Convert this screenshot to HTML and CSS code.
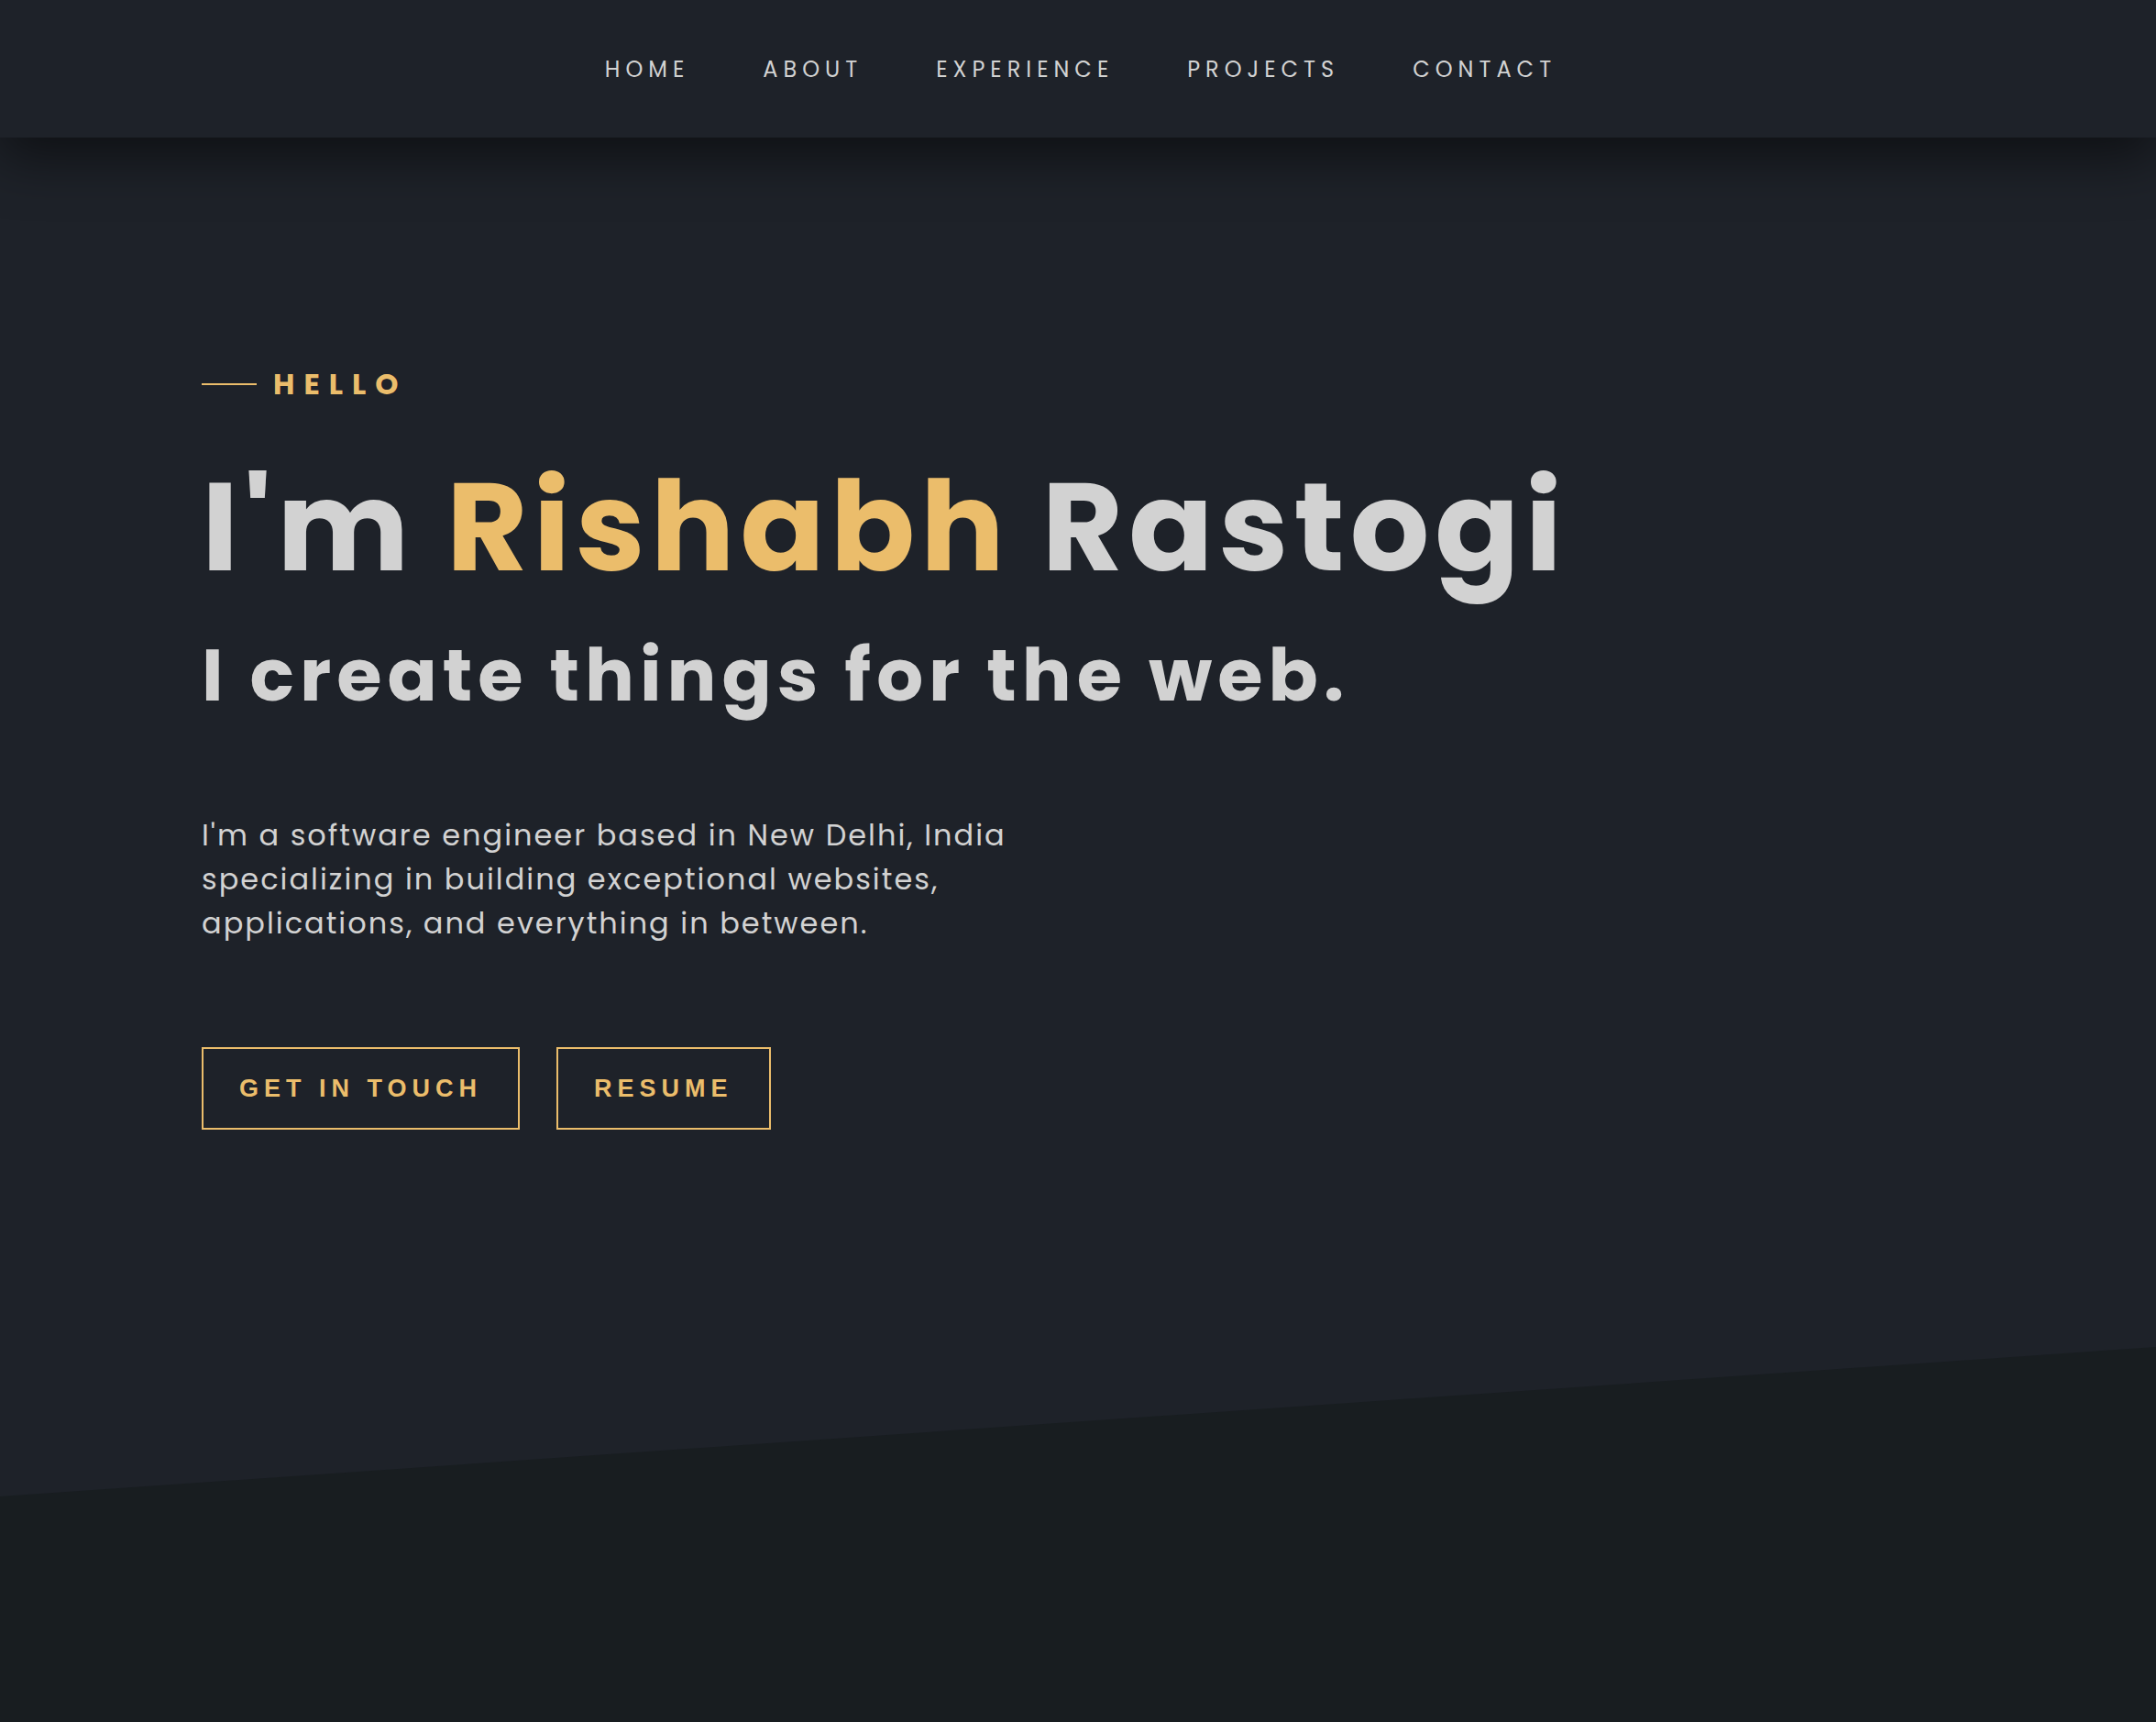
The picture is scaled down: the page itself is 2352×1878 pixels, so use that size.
FILE: index.html
```html
<!DOCTYPE html>
<html lang="en">
<head>
<meta charset="utf-8">
<meta name="viewport" content="width=device-width, initial-scale=1">
<title>Rishabh Rastogi</title>
<link rel="stylesheet" href="styles.css">
</head>
<body>
<header class="site-header">
  <nav class="nav" aria-label="Main">
    <a class="nav-link" href="#home">HOME</a>
    <a class="nav-link" href="#about">ABOUT</a>
    <a class="nav-link" href="#experience">EXPERIENCE</a>
    <a class="nav-link" href="#projects">PROJECTS</a>
    <a class="nav-link" href="#contact">CONTACT</a>
  </nav>
</header>
<main>
  <section class="hero" id="home">
    <p class="greeting">HELLO</p>
    <h1 class="name">I'm <span class="accent">Rishabh</span> Rastogi</h1>
    <h2 class="tagline">I create things for the web.</h2>
    <p class="intro">I'm a software engineer based in New Delhi, India specializing in building exceptional websites, applications, and everything in between.</p>
    <div class="actions">
      <button class="button" type="button">GET IN TOUCH</button>
      <button class="button" type="button">RESUME</button>
    </div>
  </section>
</main>
</body>
</html>
```
FILE: styles.css
```css
:root {
  --surface: #1e2229;
  --dark: #181d20;
  --text: #d2d2d2;
  --gold: #ebbd6b;
}

* {
  box-sizing: border-box;
}

body {
  margin: 0;
  background: var(--dark);
  color: var(--text);
  font-family: Poppins, Inter, "Open Sans", sans-serif;
}

.site-header {
  position: sticky;
  top: 0;
  z-index: 1;
  background: var(--surface);
  box-shadow: 0 20px 60px rgba(0, 0, 0, 0.55);
}

/* The extra left padding balances the letter-spacing after the last link */
.nav {
  display: flex;
  flex-wrap: wrap;
  justify-content: center;
  gap: 0 80px;
  padding: 56px 40px 54px 46px;
}

.nav-link {
  color: var(--text);
  font-size: 24px;
  font-weight: 400;
  line-height: 40px;
  letter-spacing: 6px;
  text-decoration: none;
}

/* Slanted lower edge: the right side ends above the left */
.hero {
  padding: 245px 220px 400px;
  background: var(--surface);
  clip-path: polygon(0 0, 100% 0, 100% 89%, 0 100%);
}

.greeting {
  display: flex;
  align-items: center;
  gap: 18px;
  margin: 0 0 60px;
  color: var(--gold);
  font-size: 32px;
  font-weight: 700;
  line-height: 48px;
  letter-spacing: 10px;
}

.greeting::before {
  content: "";
  width: 60px;
  height: 2px;
  background: var(--gold);
}

.name {
  margin: 0;
  font-size: 136px;
  font-weight: 700;
  line-height: 144px;
  letter-spacing: 6px;
}

.accent {
  color: var(--gold);
}

.tagline {
  margin: 29px 0 0;
  font-size: 80px;
  font-weight: 700;
  line-height: 120px;
  letter-spacing: 6px;
}

.intro {
  max-width: 900px;
  margin: 91px 0 0;
  font-size: 32px;
  line-height: 48px;
  letter-spacing: 2px;
}

.actions {
  display: flex;
  flex-wrap: wrap;
  gap: 40px;
  margin-top: 111px;
}

.button {
  padding: 28px 39px;
  border: 2px solid var(--gold);
  background: none;
  color: var(--gold);
  font-family: "Liberation Sans", Arial, sans-serif;
  font-size: 27px;
  font-weight: 700;
  line-height: 30px;
  letter-spacing: 6px;
}
```
